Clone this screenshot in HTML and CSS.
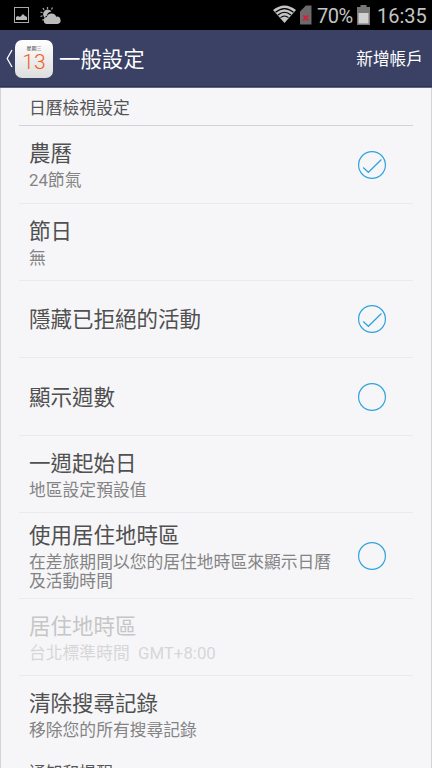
FILE: index.html
```html
<!DOCTYPE html>
<html lang="zh-Hant">
<head>
<meta charset="utf-8">
<title>一般設定</title>
<link rel="stylesheet" href="styles.css">
</head>
<body>
<div class="status">
  <svg class="pic" width="15" height="16" viewBox="0 0 15 16"><rect x=".5" y=".5" width="14" height="15" fill="none" stroke="#aaa"/><path d="M2 13V10l2-1 2 1 3-3 2 2 2 1v3z" fill="#bbb"/></svg>
  <svg class="weather" width="21" height="19" viewBox="0 0 21 19"><path d="M7.500 1v2M3 2l1 2M12.500 1.500l-1 2M.5 6l2 .7M.5 10.500l2-.7M2.500 14.500l1-1.300" stroke="#aaa" stroke-width="1.200"/><path d="M4 11a4.500 4.500 0 0 1 7.500-5.500c-3 .5-4.200 2-4.500 4Q5 10.500 4 12z" fill="#bbb"/><path d="M6.200 18a3.600 3.600 0 0 1 .5-7 5 5 0 0 1 9.500-.3 3.700 3.700 0 0 1 1.300 7.300z" fill="#bbb"/></svg>
  <span class="grow"></span>
  <svg class="wifi" width="23" height="18" viewBox="0 0 23 18"><path d="M0 5Q11.500-4 23 5L11.500 18z" fill="#c4c4c4"/><path d="M2.500 7.300Q11.500 0 20.500 7.300M5 10Q11.500 4.600 18 10M7.500 12.700Q11.500 9.400 15.500 12.700" fill="none" stroke="#000" stroke-width="1.100"/></svg>
  <svg class="sim" width="12" height="20" viewBox="0 0 12 20"><path d="M0 6.500L6 .5h5.500v19H0z" fill="#6b6b6b"/><path d="M3.300 10.300l5 5M8.300 10.300l-5 5" stroke="#d5203a" stroke-width="1.900"/></svg>
  <span class="pct">70%</span>
  <svg class="battery" width="13" height="20" viewBox="0 0 13 20"><path d="M3.500 0h6v2h3.500v18H0V2h3.500z" fill="#777"/><path d="M1.500 8h10v10.500h-10z" fill="#d0d0d0"/></svg>
  <span class="clock">16:35</span>
</div>
<header class="bar">
  <svg class="back" width="7" height="19" viewBox="0 0 7 19"><path d="M6 1L1.200 9.500 6 18" fill="none" stroke="#fff" stroke-width="1.300"/></svg>
  <div class="app"><span class="dow">星期三</span><span class="day">13</span></div>
  <h1>一般設定</h1>
  <span class="action">新增帳戶</span>
</header>
<main>
  <h2>日曆檢視設定</h2>
  <div class="row"><div class="txt"><b>農曆</b><p>24節氣</p></div><svg class="check" viewBox="0 0 28 28"><circle cx="14" cy="14" r="13.400"/><path d="M5.200 16.500l5.200 4.800L23.400 8.500"/></svg></div>
  <div class="row"><div class="txt"><b>節日</b><p>無</p></div></div>
  <div class="row single"><div class="txt"><b>隱藏已拒絕的活動</b></div><svg class="check" viewBox="0 0 28 28"><circle cx="14" cy="14" r="13.400"/><path d="M5.200 16.500l5.200 4.800L23.400 8.500"/></svg></div>
  <div class="row single tall"><div class="txt"><b>顯示週數</b></div><svg class="check" viewBox="0 0 28 28"><circle cx="14" cy="14" r="13.400"/></svg></div>
  <div class="row"><div class="txt"><b>一週起始日</b><p>地區設定預設值</p></div></div>
  <div class="row three"><div class="txt"><b>使用居住地時區</b><p>在差旅期間以您的居住地時區來顯示日曆<br>及活動時間</p></div><svg class="check" viewBox="0 0 28 28"><circle cx="14" cy="14" r="13.400"/></svg></div>
  <div class="row off"><div class="txt"><b>居住地時區</b><p>台北標準時間&nbsp; GMT+8:00</p></div></div>
  <div class="row last"><div class="txt"><b>清除搜尋記錄</b><p>移除您的所有搜尋記錄</p></div></div>
  <h2 class="next">通知和提醒</h2>
</main>
</body>
</html>
```
FILE: styles.css
```css
* { box-sizing: border-box; margin: 0; padding: 0; }
body {
  width: 432px;
  height: 768px;
  overflow: hidden;
  display: flex;
  flex-direction: column;
  background: #f6f6f9;
  font-family: Roboto, "Noto Sans CJK TC", sans-serif;
}
svg { display: block; flex: none; }
.status {
  flex: none;
  height: 30px;
  display: flex;
  align-items: center;
  padding: 0 7px 0 14px;
  background: #000;
  color: #c4c4c4;
  font-size: 20px;
}
.weather { margin-left: 11px; }
.grow { flex: 1; }
.wifi { margin-right: 4px; margin-top: -2px; }
.pct { width: 36px; margin-left: 5px; padding-top: 2px; letter-spacing: -.5px; white-space: nowrap; }
.battery { margin-left: 4px; }
.clock { width: 48px; margin-left: 7px; padding-top: 2px; white-space: nowrap; }
.bar {
  flex: none;
  height: 58px;
  display: flex;
  align-items: center;
  padding: 0 9px 0 6px;
  background: #3a4164;
  border-bottom: 1px solid #5f6587;
  box-shadow: inset 0 -1px #2b3158;
  color: #fff;
}
.app {
  width: 38px;
  height: 38px;
  margin-left: 2px;
  display: flex;
  flex-direction: column;
  align-items: center;
  border-radius: 7px;
  background: linear-gradient(#fff, #dedede);
}
.dow { margin-top: 5px; font-size: 5px; line-height: 6px; color: #333; }
.day { font-size: 21px; font-weight: 300; line-height: 22px; color: #f06020; }
h1 { flex: 1; margin-left: 6px; padding-top: 2px; font-size: 21.4px; line-height: 30px; font-weight: 400; }
.action { padding-top: 2px; font-size: 16.7px; line-height: 24px; }
main {
  flex: 1;
  min-height: 0;
  overflow: hidden;
  padding: 0 18px;
  border: solid #d4d4d6;
  border-width: 0 1px;
}
h2 {
  height: 38px;
  padding: 0 10px;
  border-bottom: 1px solid #d2d2d5;
  font-size: 16.8px;
  line-height: 40px;
  font-weight: 400;
  color: #555;
}
.row {
  height: 77px;
  display: flex;
  align-items: center;
  justify-content: space-between;
  padding: 0 27px 0 10px;
  border-bottom: 1px solid #ebebee;
}
.row:nth-of-type(1), .tall { height: 78px; }
.row.three { height: 86px; }
.row b { display: block; font-size: 21.5px; line-height: 32px; font-weight: 400; color: #505050; white-space: nowrap; }
.row p { padding-top: 1px; font-size: 16.8px; line-height: 19.5px; color: #848484; white-space: nowrap; }
.single b { padding-top: 2px; }
.row.off b { color: #c6c6c6; }
.row.off p { color: #d6d6d6; }
.last { border-bottom-color: transparent; }
.check { width: 28px; height: 28px; fill: none; stroke: #2fa3dc; stroke-width: 1.2; }
.next { line-height: 41px; }
```
